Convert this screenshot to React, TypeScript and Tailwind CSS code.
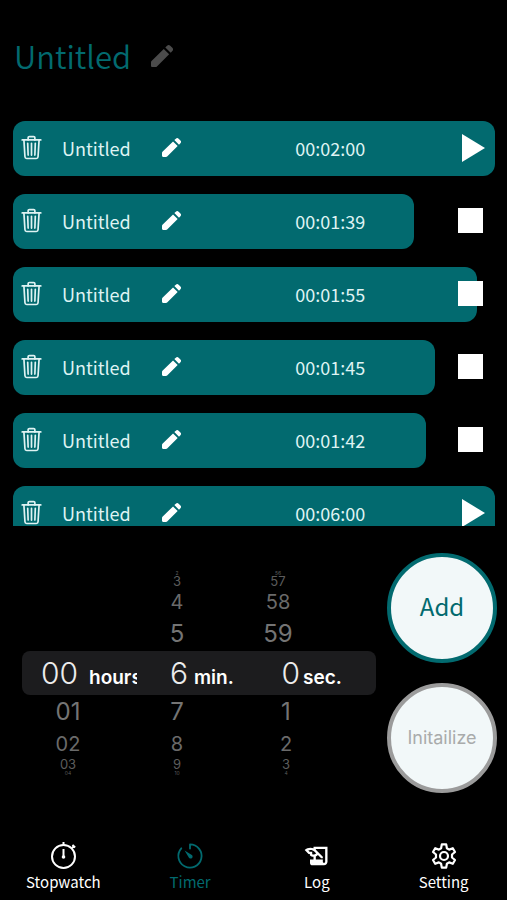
import { useState } from 'react';
import { IoTrashOutline } from 'react-icons/io5';
import { MdHistoryEdu } from 'react-icons/md';

const TIMERS = [
  { id: 1, name: 'Untitled', time: '00:02:00', left: 100, running: false },
  { id: 2, name: 'Untitled', time: '00:01:39', left: 83.2, running: true },
  { id: 3, name: 'Untitled', time: '00:01:55', left: 96.3, running: true },
  { id: 4, name: 'Untitled', time: '00:01:45', left: 87.5, running: true },
  { id: 5, name: 'Untitled', time: '00:01:42', left: 85.6, running: true },
  { id: 6, name: 'Untitled', time: '00:06:00', left: 100, running: false },
];

// above / below are listed top to bottom, the way the wheel shows them
const WHEELS = [
  { unit: 'hours', label: 'Hours', above: ['', '', '', ''], value: '00', below: ['01', '02', '03', '04'], digits: 'w-14', gap: 'pl-[11px]', top: 'w-23', bottom: 'w-23' },
  { unit: 'min.', label: 'Minutes', above: ['2', '3', '4', '5'], value: '6', below: ['7', '8', '9', '10'], digits: 'w-12', gap: 'pl-1.5', top: 'w-[74px]', bottom: 'w-[74px]' },
  { unit: 'sec.', label: 'Seconds', above: ['56', '57', '58', '59'], value: '0', below: ['1', '2', '3', '4'], digits: 'w-[42px]', gap: 'pl-[3px]', top: 'w-10', bottom: 'w-14' },
];

const ROWS_ABOVE = [
  'h-1 text-[5px] leading-1 text-[#5c5c5c]',
  'mt-px h-[11px] text-[13px] leading-[11px] text-[#5c5c5c]',
  'h-[30px] text-[20px] leading-[30px] text-[#6a6a6a]',
  'h-[34px] text-2xl leading-[34px] text-[#747474]',
];

const ROWS_BELOW = [
  'h-[34px] text-2xl leading-[34px] text-[#747474]',
  'h-[30px] text-[20px] leading-[30px] text-[#6a6a6a]',
  'mb-px h-[11px] text-[13px] leading-[11px] text-[#5c5c5c]',
  'h-1 text-[5px] leading-1 text-[#5c5c5c]',
];

type IconProps = { className?: string };

function PencilIcon({ className }: IconProps) {
  return (
    <svg viewBox="0 0 20 20" className={className} fill="currentColor">
      <path d="M0 18.800v-3c0-.5.200-.9.500-1.200L11.600 3.600l4.900 4.900L5.400 19.500c-.3.300-.7.500-1.200.5h-3c-.700 0-1.200-.5-1.200-1.200z" />
      <path d="M13 2.200 14.600.7c.900-.9 2-.9 2.900 0l1.900 1.900c.900.900.9 2 0 2.900l-1.500 1.600z" />
    </svg>
  );
}

function StopwatchIcon({ className }: IconProps) {
  return (
    <svg viewBox="0 0 28 28" className={className} fill="none" stroke="currentColor" strokeWidth="2">
      <circle cx="14.500" cy="14.500" r="11.500" />
      <path d="M14.500 0v3M23 6l2-2M23.500 2.900l2.600 2.600" />
      <path d="M14.500 7v7" />
      <circle cx="14.500" cy="15" r="1.800" fill="currentColor" stroke="none" />
    </svg>
  );
}

function TimerIcon({ className }: IconProps) {
  return (
    <svg viewBox="0 0 28 28" className={className} fill="none" stroke="currentColor" strokeWidth="1.800" strokeLinecap="round" strokeLinejoin="round">
      <path d="M14 6.500V2.400a11.600 11.600 0 1 1-8.700 3.900" />
      <path d="M8.600 8.400 15.400 12.700a2 2 0 1 1-2.600 2.700z" fill="currentColor" stroke="none" />
    </svg>
  );
}

function GearIcon({ className }: IconProps) {
  return (
    <svg viewBox="0 0 28 28" className={className} fill="none" stroke="currentColor" strokeWidth="2.200" strokeLinejoin="round">
      <circle cx="14" cy="14" r="4" />
      <path d="M11.800 2.400h4.400l.7 3.900 2.200 1.300 3.700-1.400 2.200 3.800-3 2.500v3l3 2.500-2.200 3.800-3.700-1.400-2.200 1.300-.7 3.900h-4.400l-.7-3.900-2.200-1.300-3.700 1.400-2.200-3.800 3-2.500v-3l-3-2.500 2.200-3.800 3.700 1.400 2.200-1.300z" />
    </svg>
  );
}

const TABS = [
  { name: 'Stopwatch', icon: StopwatchIcon },
  { name: 'Timer', icon: TimerIcon },
  { name: 'Log', icon: MdHistoryEdu },
  { name: 'Setting', icon: GearIcon },
];

function TimerRow({ timer }: { timer: (typeof TIMERS)[number] }) {
  return (
    <li className="grid h-[55px] shrink-0">
      <div className="col-start-1 row-start-1 rounded-xl bg-[#026a6f]" style={{ width: `${timer.left}%` }} />
      <div className="col-start-1 row-start-1 grid grid-cols-[49px_100px_2fr_3fr] items-center pb-0.5 text-lg text-[#dff3f3]">
        <button type="button" aria-label="Delete timer" className="pl-[5px]">
          <IoTrashOutline className="size-[27px]" />
        </button>
        <span>{timer.name}</span>
        <button type="button" aria-label="Edit name" className="justify-self-start text-white">
          <PencilIcon className="size-[19px]" />
        </button>
        <div className="flex items-center justify-between">
          <span>{timer.time}</span>
          {timer.running ? (
            <button type="button" aria-label="Stop" className="mr-3 size-[25px] bg-white" />
          ) : (
            <button type="button" aria-label="Start" className="mr-2.5 text-white">
              <svg viewBox="0 0 23 28" className="h-7 w-[23px]" fill="currentColor">
                <path d="M0 0 23 14 0 28z" />
              </svg>
            </button>
          )}
        </div>
      </div>
    </li>
  );
}

function Wheel({ wheel }: { wheel: (typeof WHEELS)[number] }) {
  return (
    <div role="group" aria-label={wheel.label} className="min-w-0 flex-1">
      {wheel.above.map((n, i) => (
        <div key={i} className={`text-center ${ROWS_ABOVE[i]} ${wheel.top}`}>
          {n}
        </div>
      ))}
      <div className="mr-[3px] flex h-11 items-baseline overflow-hidden">
        <span className={`shrink-0 text-right text-3xl leading-11 font-light text-[#ececec] ${wheel.digits}`}>{wheel.value}</span>
        <span className={`text-[19px] leading-11 font-semibold text-white ${wheel.gap}`}>{wheel.unit}</span>
      </div>
      {wheel.below.map((n, i) => (
        <div key={i} className={`text-center ${ROWS_BELOW[i]} ${wheel.bottom}`}>
          {n}
        </div>
      ))}
    </div>
  );
}

export default function App() {
  const [tab, setTab] = useState('Timer');

  return (
    <div className="flex h-screen flex-col bg-black font-['Noto_Sans_CJK_JP',sans-serif]">
      <header className="flex h-[121px] shrink-0 items-start gap-5 px-3.5 pt-[34px]">
        <h1 className="text-[31px] leading-11 font-[350] text-[#026a6f]">Untitled</h1>
        <button type="button" aria-label="Edit title" className="pt-[11px] text-[#4b4b4b]">
          <PencilIcon className="size-[22px]" />
        </button>
      </header>

      <ul className="flex min-h-0 flex-1 flex-col gap-[18px] overflow-y-auto pr-3 pl-[13px] [scrollbar-width:none]">
        {TIMERS.map((t) => (
          <TimerRow key={t.id} timer={t} />
        ))}
      </ul>

      <section className="flex shrink-0 items-center gap-[11px] pt-[27px] pr-2.5 pl-[22px]">
        <div className="grid flex-1 items-center font-[Inter,sans-serif]">
          <div className="col-start-1 row-start-1 h-11 rounded-lg bg-[#1c1c1e]" />
          <div className="col-start-1 row-start-1 flex">
            {WHEELS.map((w) => (
              <Wheel key={w.unit} wheel={w} />
            ))}
          </div>
        </div>
        <div className="flex flex-col gap-5">
          <button type="button" className="size-[110px] rounded-full border-4 border-[#026a6f] bg-[#f2f8f9] pb-1 text-2xl text-[#026a6f]">
            Add
          </button>
          <button type="button" className="size-[110px] rounded-full border-4 border-[#9b9b9b] bg-[#f2f8f9] font-[Inter,sans-serif] text-lg text-[#a9abab]">
            Initailize
          </button>
        </div>
      </section>

      <nav className="mt-[49px] grid shrink-0 grid-cols-4 pb-1.5">
        {TABS.map((t) => {
          const Icon = t.icon;
          return (
            <button
              key={t.name}
              type="button"
              onClick={() => setTab(t.name)}
              className={`flex flex-col items-center text-[15px] leading-6 ${tab === t.name ? 'text-[#026a6f]' : 'text-white'}`}
            >
              <Icon className="size-7" />
              {t.name}
            </button>
          );
        })}
      </nav>
    </div>
  );
}
